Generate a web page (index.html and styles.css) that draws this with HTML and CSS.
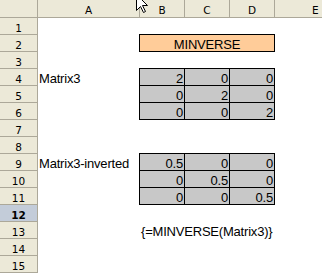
FILE: index.html
```html
<!DOCTYPE html>
<html>
<head>
<meta charset="utf-8">
<link rel="stylesheet" href="styles.css">
</head>
<body>
<div class="sheet">
  <div class="hd corner"></div>
  <div class="hd col">A</div>
  <div class="hd col">B</div>
  <div class="hd col">C</div>
  <div class="hd col">D</div>
  <div class="hd col last">E</div>

  <div class="hd row">1</div><div class="c"></div><div class="c"></div><div class="c"></div><div class="c"></div><div class="c"></div>

  <div class="hd row">2</div><div class="c"></div><div class="c title">MINVERSE</div><div class="c"></div>

  <div class="hd row">3</div><div class="c"></div><div class="c"></div><div class="c"></div><div class="c"></div><div class="c"></div>

  <div class="hd row">4</div><div class="c">Matrix3</div><div class="c m">2</div><div class="c m">0</div><div class="c m">0</div><div class="c"></div>
  <div class="hd row">5</div><div class="c"></div><div class="c m">0</div><div class="c m">2</div><div class="c m">0</div><div class="c"></div>
  <div class="hd row">6</div><div class="c"></div><div class="c m">0</div><div class="c m">0</div><div class="c m">2</div><div class="c"></div>

  <div class="hd row">7</div><div class="c"></div><div class="c"></div><div class="c"></div><div class="c"></div><div class="c"></div>
  <div class="hd row">8</div><div class="c"></div><div class="c"></div><div class="c"></div><div class="c"></div><div class="c"></div>

  <div class="hd row">9</div><div class="c">Matrix3-inverted</div><div class="c m">0.5</div><div class="c m">0</div><div class="c m">0</div><div class="c"></div>
  <div class="hd row">10</div><div class="c"></div><div class="c m">0</div><div class="c m">0.5</div><div class="c m">0</div><div class="c"></div>
  <div class="hd row">11</div><div class="c"></div><div class="c m">0</div><div class="c m">0</div><div class="c m">0.5</div><div class="c"></div>

  <div class="hd row sel">12</div><div class="c"></div><div class="c"></div><div class="c"></div><div class="c"></div><div class="c"></div>
  <div class="hd row">13</div><div class="c"></div><div class="c formula">{=MINVERSE(Matrix3)}</div><div class="c"></div><div class="c"></div><div class="c"></div>
  <div class="hd row">14</div><div class="c"></div><div class="c"></div><div class="c"></div><div class="c"></div><div class="c"></div>
  <div class="hd row">15</div><div class="c"></div><div class="c"></div><div class="c"></div><div class="c"></div><div class="c"></div>
</div>
<svg class="cursor" width="13" height="20" viewBox="0 0 13 20">
  <path d="M0.5 0.5 L0.5 16.5 L4.5 12.5 L7.5 18.5 L9.5 17.5 L6.5 11.5 L11.5 11.5 Z" fill="#fff" stroke="#000" stroke-width="1"/>
</svg>
</body>
</html>
```

FILE: styles.css
```css
html, body {
  margin: 0;
  padding: 0;
  background: #fff;
  overflow: hidden;
  width: 322px;
  height: 273px;
}
body {
  position: relative;
  font-family: "Liberation Sans", Arial, sans-serif;
  color: #000;
}
.sheet {
  display: grid;
  grid-template-columns: 38px 102px 45px 45px 45px 1fr;
  grid-template-rows: 18px repeat(15, 17px);
  width: 322px;
}
.hd {
  box-sizing: border-box;
  background: #ece9d8;
  border-right: 1px solid #aca899;
  border-bottom: 1px solid #aca899;
  font-family: "DejaVu Sans", sans-serif;
  font-size: 10.5px;
  text-align: center;
  color: #000;
}
.col {
  padding-top: 4px;
  line-height: 12px;
}
.last {
  border-right: none;
  text-align: left;
  padding-left: 37px;
}
.row {
  padding-top: 3px;
  line-height: 14px;
}
.sel {
  background: #c3ccd9;
  font-weight: bold;
}
.c {
  box-sizing: border-box;
  font-size: 13px;
  letter-spacing: -0.2px;
  line-height: 15px;
  padding: 2px 1px 0 1px;
  white-space: nowrap;
  min-width: 0;
}
.m {
  margin: -1px 0 0 -1px;
  border: 1px solid #000;
  background: #c8c8c8;
  text-align: right;
  padding-right: 1px;
}
.title {
  grid-column: span 3;
  margin: -1px 0 0 -1px;
  border: 1px solid #000;
  background: #ffcc99;
  text-align: center;
}
.formula {
  overflow: visible;
}
.cursor {
  position: absolute;
  left: 136px;
  top: -6px;
}
```
